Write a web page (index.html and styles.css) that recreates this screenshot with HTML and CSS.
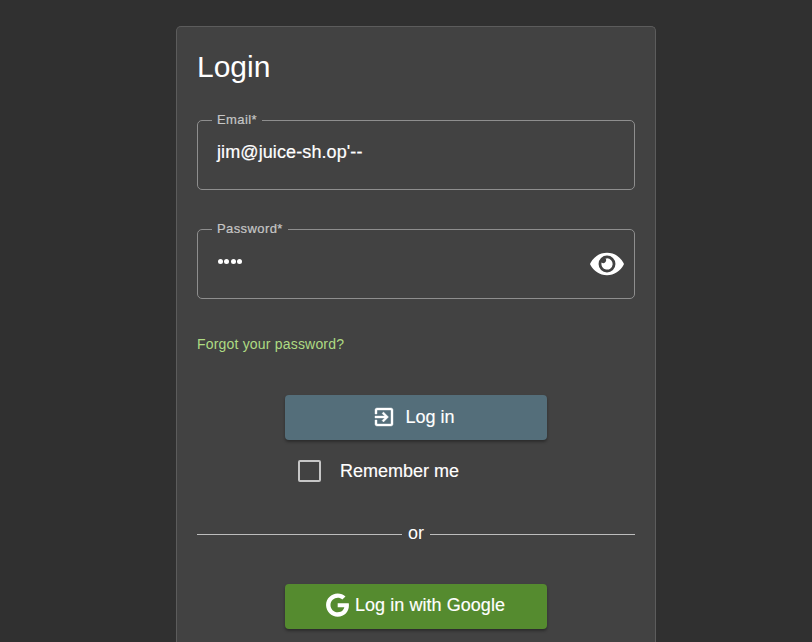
FILE: index.html
```html
<!DOCTYPE html>
<html lang="en">
<head>
<meta charset="utf-8">
<title>Login</title>
<link rel="stylesheet" href="styles.css">
</head>
<body>
<main class="card">
  <h1 class="title">Login</h1>
  <fieldset class="field">
    <legend class="label"><span>Email*</span></legend>
    <div class="value">jim@juice-sh.op'--</div>
  </fieldset>
  <fieldset class="field">
    <legend class="label"><span>Password*</span></legend>
    <div class="value">
      <span class="dots"><i></i><i></i><i></i><i></i></span>
      <svg class="eye" viewBox="0 0 576 512"><path d="M572.52 241.4C518.29 135.59 410.93 64 288 64S57.68 135.64 3.48 241.41a32.35 32.35 0 0 0 0 29.19C57.71 376.41 165.07 448 288 448s230.32-71.64 284.52-177.41a32.35 32.35 0 0 0 0-29.19zM288 400a144 144 0 1 1 144-144 143.93 143.93 0 0 1-144 144zm0-240a95.31 95.31 0 0 0-25.18 3.79 47.85 47.85 0 0 1-66.9 66.9A95.78 95.78 0 1 0 288 160z"/></svg>
    </div>
  </fieldset>
  <a class="forgot">Forgot your password?</a>
  <button class="button login">
    <svg class="enter" viewBox="0 0 24 24"><path d="M10.09 15.59L11.5 17l5-5-5-5-1.41 1.41L12.67 11H3v2h9.67l-2.58 2.59zM19 3H5c-1.11 0-2 .9-2 2v4h2V5h14v14H5v-4H3v4c0 1.1.89 2 2 2h14c1.1 0 2-.9 2-2V5c0-1.1-.9-2-2-2z"/></svg>
    <span>Log in</span>
  </button>
  <label class="remember"><span class="box"></span><span>Remember me</span></label>
  <div class="divider"><span>or</span></div>
  <button class="button google">
    <svg class="g" viewBox="0 0 488 512"><path d="M488 261.8C488 403.3 391.1 504 248 504 110.8 504 0 393.2 0 256S110.8 8 248 8c66.8 0 123 24.5 166.3 64.9l-67.5 64.9C258.5 52.6 94.3 116.6 94.3 256c0 86.5 69.1 156.6 153.7 156.6 98.2 0 135-70.4 140.8-106.9H248v-85.3h236.1c2.3 12.7 3.9 24.9 3.9 41.4z"/></svg>
    <span>Log in with Google</span>
  </button>
</main>
</body>
</html>
```
FILE: styles.css
```css
* { box-sizing: border-box; }
html { height: 100%; overflow: hidden; background: #303030; }
body {
  height: 100%;
  margin: 0;
  padding-top: 26px;
  overflow: hidden;
  color: #fff;
  font-family: "Liberation Sans", Arial, sans-serif;
  font-size: 18px;
}
svg { fill: #fff; flex: none; }
.card {
  display: flex;
  flex-direction: column;
  width: 480px;
  height: 616px;
  margin: 0 auto 0 176px;
  padding: 20px 20px 0;
  background: #424242;
  border: 1px solid #5c5c5c;
  border-bottom: 0;
  border-radius: 5px 5px 0 0;
}
.title { margin: 0; font-size: 30px; font-weight: 400; line-height: 40px; }
.field {
  flex: none;
  height: 77px;
  margin: 26px 0 0;
  padding: 0 10px 0 14px;
  border: 1px solid #8e8e8e;
  border-radius: 5px;
}
.field + .field { margin-top: 32px; }
.label {
  height: 15px;
  padding: 0 5px;
  color: #c6c6c6;
  font-size: 13px;
  line-height: 13px;
  letter-spacing: .4px;
  -webkit-text-stroke: .2px #c6c6c6;
}
.value {
  display: flex;
  justify-content: space-between;
  padding: 13px 0 0 5px;
  line-height: 22px;
  letter-spacing: .1px;
  -webkit-text-stroke: .2px #fff;
}
.dots { display: flex; gap: 1.5px; padding: 9px 0 0 .5px; }
.dots i { width: 5px; height: 5px; border-radius: 50%; background: #fff; }
.eye { width: 34px; height: 30px; margin-top: -1px; }
.forgot { margin-top: 37px; color: #aedb83; font-size: 14px; line-height: 16px; letter-spacing: .19px; }
.button {
  display: flex;
  flex: none;
  align-items: center;
  justify-content: center;
  align-self: center;
  width: 262px;
  height: 45px;
  padding: 0;
  border: 0;
  border-radius: 4px;
  color: #fff;
  font: inherit;
  -webkit-text-stroke: .15px #fff;
  box-shadow: 0 2px 3px rgba(0, 0, 0, .35);
}
.login { gap: 9px; margin-top: 43px; padding-right: 5px; background: #546e7a; }
.enter { width: 24px; height: 24px; margin-bottom: 2px; stroke: #fff; stroke-width: .4; }
.google { gap: 6px; padding: 0 1px 2px 0; background: #558b2f; letter-spacing: .05px; }
.g { width: 23px; height: 24px; margin-bottom: 1px; }
.remember { display: flex; align-items: center; gap: 19px; margin: 20px 0 0 101px; height: 22px; -webkit-text-stroke: .15px #fff; }
.box { width: 23px; height: 22px; border: 2px solid #c6c6c6; border-radius: 2px; }
.divider { display: flex; align-items: center; gap: 6px; height: 22px; margin: 41px 0 39px; }
.divider span { padding-bottom: 2px; }
.divider::before, .divider::after { content: ""; flex: 1; height: 1px; background: #bdbdbd; }
```
